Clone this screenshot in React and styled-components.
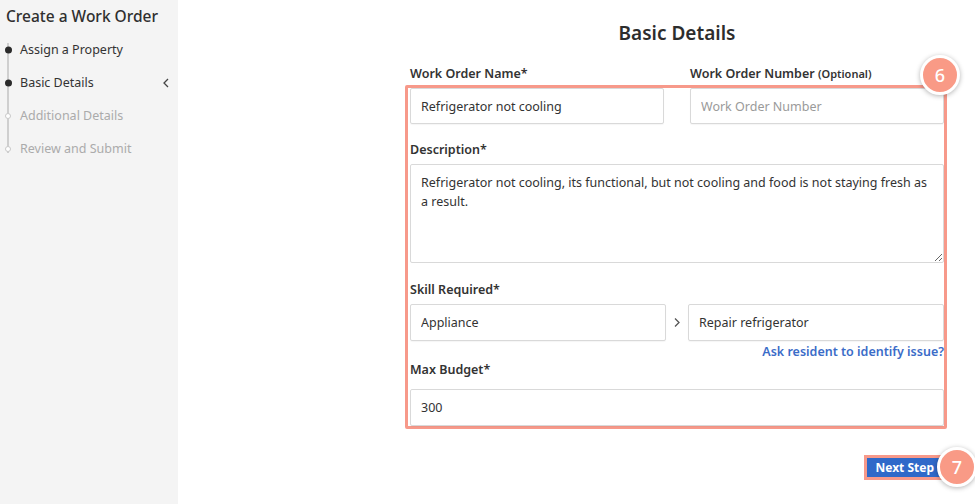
import React from 'react';
import styled, { createGlobalStyle } from 'styled-components';

const GlobalStyle = createGlobalStyle`
  html, body {
    margin: 0;
    padding: 0;
    background: #ffffff;
    font-family: "Noto Sans", "Open Sans", Arial, sans-serif;
    color: #333333;
  }
  * { box-sizing: border-box; }
`;

const Page = styled.div`
  display: flex;
  width: 975px;
  height: 504px;
  overflow: hidden;
`;

const Sidebar = styled.aside`
  width: 178px;
  flex-shrink: 0;
  background: #f4f4f4;
  padding: 6px 0 0 6px;
`;

const SideTitle = styled.div`
  font-size: 15.5px;
  font-weight: 500;
  line-height: 20px;
  color: #2f2f2f;
  margin-bottom: 7px;
`;

const Steps = styled.ul`
  list-style: none;
  margin: 0;
  padding: 0;
  position: relative;
  &::before {
    content: '';
    position: absolute;
    left: 1px;
    top: 10px;
    bottom: 12px;
    width: 2px;
    background: #cfcfcf;
  }
`;

const Step = styled.li`
  position: relative;
  display: flex;
  align-items: center;
  height: 33px;
  padding-left: 14px;
  padding-right: 8px;
  font-size: 12.5px;
  color: ${p => (p.done ? '#333333' : '#ababab')};
`;

const Dot = styled.span`
  position: absolute;
  left: -1px;
  top: 50%;
  transform: translateY(-50%);
  width: ${p => (p.done ? '7px' : '6px')};
  height: ${p => (p.done ? '7px' : '6px')};
  border-radius: 50%;
  background: ${p => (p.done ? '#2b2b2b' : '#ffffff')};
  border: ${p => (p.done ? 'none' : '1px solid #c9c9c9')};
`;

const StepLabel = styled.span`
  flex: 1;
`;

const Main = styled.main`
  flex: 1;
  padding: 19px 0 0 232px;
`;

const Form = styled.div`
  width: 534px;
  display: flex;
  flex-direction: column;
`;

const Heading = styled.h1`
  margin: 0 0 18px;
  text-align: center;
  font-size: 19px;
  font-weight: 600;
  line-height: 28px;
  color: #2d2d2d;
`;

const Row = styled.div`
  display: flex;
  align-items: center;
  gap: ${p => p.gap || '26px'};
`;

const Col = styled.div`
  flex: 1;
`;

const Label = styled.div`
  font-size: 12.5px;
  font-weight: 600;
  line-height: 18px;
  color: #333333;
  margin-top: ${p => p.top || '0'};
  margin-bottom: ${p => p.bottom || '5px'};
  small {
    font-size: 11px;
  }
`;

const Highlight = styled.div`
  position: relative;
  margin-left: -5px;
  margin-right: -3px;
  padding: 0 0 0 2px;
  border: 3px solid #f7998a;
  border-radius: 2px;
`;

const Field = styled.input`
  display: block;
  width: 100%;
  height: ${p => p.h || '36px'};
  border: 1px solid #d9d9d9;
  border-radius: 2px;
  padding: 0 10px;
  font-family: inherit;
  font-size: 12.5px;
  color: #333333;
  background: #ffffff;
  box-shadow: 0 1px 1px rgba(0, 0, 0, 0.04);
  outline: none;
  &::placeholder {
    color: #9a9a9a;
  }
`;

const Area = styled.textarea`
  display: block;
  width: 100%;
  height: 99px;
  border: 1px solid #d9d9d9;
  border-radius: 2px;
  padding: 8px 10px;
  font-family: inherit;
  font-size: 12.5px;
  line-height: 19px;
  color: #333333;
  resize: vertical;
  outline: none;
`;

const Arrow = styled.span`
  width: 22px;
  text-align: center;
  color: #555555;
  font-size: 14px;
  flex-shrink: 0;
`;

const LinkRow = styled.div`
  text-align: right;
  line-height: 16px;
  margin-top: 1px;
`;

const Link = styled.a`
  font-size: 12.5px;
  font-weight: 600;
  color: #3b6cc8;
  text-decoration: none;
`;

const Footer = styled.div`
  display: flex;
  justify-content: flex-end;
  margin-top: 26px;
  margin-right: -1px;
  position: relative;
`;

const NextButton = styled.button`
  height: 25px;
  padding: 0 9px;
  border: 2px solid #f7998a;
  background: #2f69c9;
  background-clip: padding-box;
  box-shadow: inset 0 0 0 1px #f7998a;
  color: #ffffff;
  font-family: inherit;
  font-size: 12px;
  font-weight: 700;
`;

const Badge = styled.div`
  position: absolute;
  width: 40px;
  height: 40px;
  border-radius: 50%;
  background: #f99a86;
  border: 3px solid #ffffff;
  box-shadow: 0 1px 5px rgba(0, 0, 0, 0.3);
  color: #ffffff;
  font-size: 18px;
  font-weight: 500;
  display: flex;
  align-items: center;
  justify-content: center;
  top: ${p => p.top};
  right: ${p => p.right};
`;

const steps = [
  { label: 'Assign a Property', done: true },
  { label: 'Basic Details', done: true, current: true },
  { label: 'Additional Details' },
  { label: 'Review and Submit' },
];

export default function App() {
  return (
    <Page>
      <GlobalStyle />
      <Sidebar>
        <SideTitle>Create a Work Order</SideTitle>
        <Steps>
          {steps.map(s => (
            <Step key={s.label} done={s.done}>
              <Dot done={s.done} />
              <StepLabel>{s.label}</StepLabel>
              {s.current && (
                <svg width="8" height="10" viewBox="0 0 8 10">
                  <path d="M6 1 L2 5 L6 9" fill="none" stroke="#444" strokeWidth="1.3" />
                </svg>
              )}
            </Step>
          ))}
        </Steps>
      </Sidebar>
      <Main>
        <Form>
          <Heading>Basic Details</Heading>
          <Row>
            <Col><Label bottom="2px">Work Order Name*</Label></Col>
            <Col><Label bottom="2px">Work Order Number <small>(Optional)</small></Label></Col>
          </Row>
          <Highlight>
            <Badge top="-33px" right="-16px">6</Badge>
            <Row>
              <Col><Field readOnly value="Refrigerator not cooling" /></Col>
              <Col><Field readOnly placeholder="Work Order Number" /></Col>
            </Row>
            <Label top="17px">Description*</Label>
            <Area
              readOnly
              defaultValue="Refrigerator not cooling, its functional, but not cooling and food is not staying fresh as a result."
            />
            <Label top="18px">Skill Required*</Label>
            <Row gap="0">
              <Col><Field h="37px" readOnly value="Appliance" /></Col>
              <Arrow>
                <svg width="8" height="11" viewBox="0 0 8 11">
                  <path d="M2 1.5 L6 5.5 L2 9.5" fill="none" stroke="#555" strokeWidth="1.3" />
                </svg>
              </Arrow>
              <Col><Field h="37px" readOnly value="Repair refrigerator" /></Col>
            </Row>
            <LinkRow><Link href="#">Ask resident to identify issue?</Link></LinkRow>
            <Label top="1px" bottom="10px">Max Budget*</Label>
            <Field h="37px" readOnly value="300" />
          </Highlight>
          <Footer>
            <NextButton>Next Step</NextButton>
            <Badge top="-8px" right="-32px">7</Badge>
          </Footer>
        </Form>
      </Main>
    </Page>
  );
}
